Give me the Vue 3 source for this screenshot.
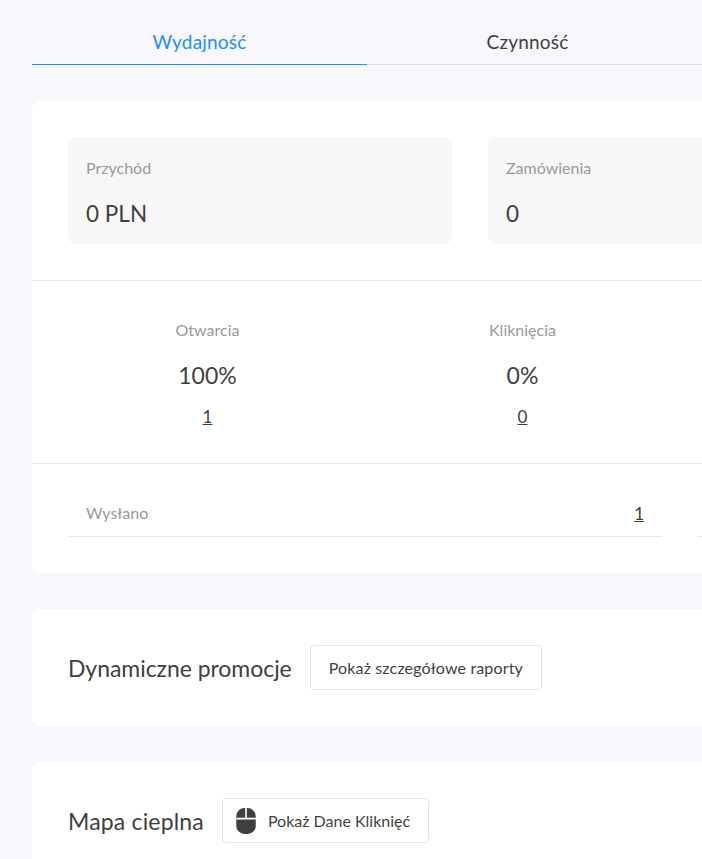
<script setup>
const stats = [
  { label: 'Przychód', value: '0 PLN' },
  { label: 'Zamówienia', value: '0' },
]
const rates = [
  { label: 'Otwarcia', pct: '100%', count: '1' },
  { label: 'Kliknięcia', pct: '0%', count: '0' },
]
</script>

<template>
  <div class="page">
    <div class="tabs">
      <div class="tab active">Wydajność</div>
      <div class="tab second">Czynność</div>
    </div>

    <section class="card">
      <div class="stats">
        <div v-for="s in stats" :key="s.label" class="stat">
          <div class="stat-label">{{ s.label }}</div>
          <div class="stat-value">{{ s.value }}</div>
        </div>
      </div>
      <div class="rates">
        <div v-for="r in rates" :key="r.label" class="rate">
          <div class="rate-label">{{ r.label }}</div>
          <div class="rate-pct">{{ r.pct }}</div>
          <a class="rate-count">{{ r.count }}</a>
        </div>
      </div>
      <div class="rows">
        <div class="row">
          <span class="row-label">Wysłano</span>
          <a class="row-value">1</a>
        </div>
        <div class="row"></div>
      </div>
    </section>

    <section class="card head-card">
      <h2>Dynamiczne promocje</h2>
      <button class="btn">Pokaż szczegółowe raporty</button>
    </section>

    <section class="card head-card">
      <h2 class="wide">Mapa cieplna</h2>
      <button class="btn btn-icon">
        <svg class="mouse" viewBox="0 0 384 512" aria-hidden="true">
          <path d="M0 352a160 160 0 0 0 160 160h64a160 160 0 0 0 160-160V224H0zM176 0h-16A160 160 0 0 0 0 160v32h176zm48 0h-16v192h176v-32A160 160 0 0 0 224 0z" />
        </svg>
        Pokaż Dane Kliknięć
      </button>
    </section>
  </div>
</template>

<style>
html, body { margin: 0; height: 859px; overflow: hidden; background: #f7f7fc; }
</style>

<style scoped>
.page {
  box-sizing: border-box;
  width: 1328px;
  height: 859px;
  padding: 0 0 0 32px;
  overflow: hidden;
  background: #f7f7fc;
  color: #3f3f3f;
  font-family: Lato, "Liberation Sans", sans-serif;
}
.tabs {
  display: flex;
  height: 65px;
  margin-bottom: 36px;
  box-sizing: border-box;
  border-bottom: 1px solid #dfdfe4;
}
.tab {
  box-sizing: border-box;
  width: 335px;
  height: 65px;
  padding-top: 30px;
  text-align: center;
  font-size: 19px;
  line-height: 24px;
  letter-spacing: 0.2px;
}
.tab.second { width: 321px; }
.tab.active {
  color: #1890ff;
  border-bottom: 1px solid #1890ff;
}
.card {
  width: 1296px;
  background: #fff;
  border-radius: 8px;
  margin-bottom: 36px;
}
.stats {
  display: flex;
  gap: 36px;
  padding: 36px;
  border-bottom: 1px solid #e6e6e6;
}
.stat {
  box-sizing: border-box;
  width: 384px;
  height: 107px;
  padding: 20px 18px 0;
  background: #f7f7f7;
  border-radius: 8px;
}
.stat-label { font-size: 16px; line-height: 22px; color: #999; }
.stat-value { margin-top: 21px; font-size: 22.5px; line-height: 28px; }
.rates {
  display: flex;
  height: 183px;
  box-sizing: border-box;
  padding: 38px 18px 0;
  border-bottom: 1px solid #e6e6e6;
}
.rate { width: 315px; text-align: center; }
.rate-label { font-size: 16px; line-height: 22px; color: #999; }
.rate-pct { margin-top: 20px; font-size: 23px; line-height: 28px; }
.rate-count {
  display: block;
  margin-top: 16px;
  font-size: 17px;
  line-height: 24px;
  text-decoration: underline;
}
.rows {
  display: flex;
  gap: 36px;
  padding: 36px;
}
.row {
  box-sizing: border-box;
  display: flex;
  justify-content: space-between;
  align-items: flex-start;
  width: 594px;
  height: 37px;
  padding: 3px 18px 0;
  border-bottom: 1px solid #e6e6e6;
}
.row-label { font-size: 16px; line-height: 20px; color: #999; }
.row-value { font-size: 17px; line-height: 22px; text-decoration: underline; }
.head-card {
  display: flex;
  align-items: center;
  gap: 18px;
  box-sizing: border-box;
  height: 117px;
  padding: 0 36px;
}
h2 {
  margin: 0;
  font-size: 23px;
  font-weight: 400;
  line-height: 28px;
  letter-spacing: -0.05px;
}
h2.wide { letter-spacing: 0.17px; }
.btn {
  box-sizing: border-box;
  height: 45px;
  padding: 0 18px;
  background: #fff;
  border: 1px solid #e5e5e5;
  border-radius: 4px;
  color: #3f3f3f;
  font: inherit;
  font-size: 16px;
  letter-spacing: 0.15px;
}
.btn-icon {
  display: flex;
  align-items: center;
  gap: 12px;
  padding: 0 18px 0 13px;
  letter-spacing: 0;
}
.mouse { width: 20px; height: 26px; fill: #3f3f3f; }
</style>
